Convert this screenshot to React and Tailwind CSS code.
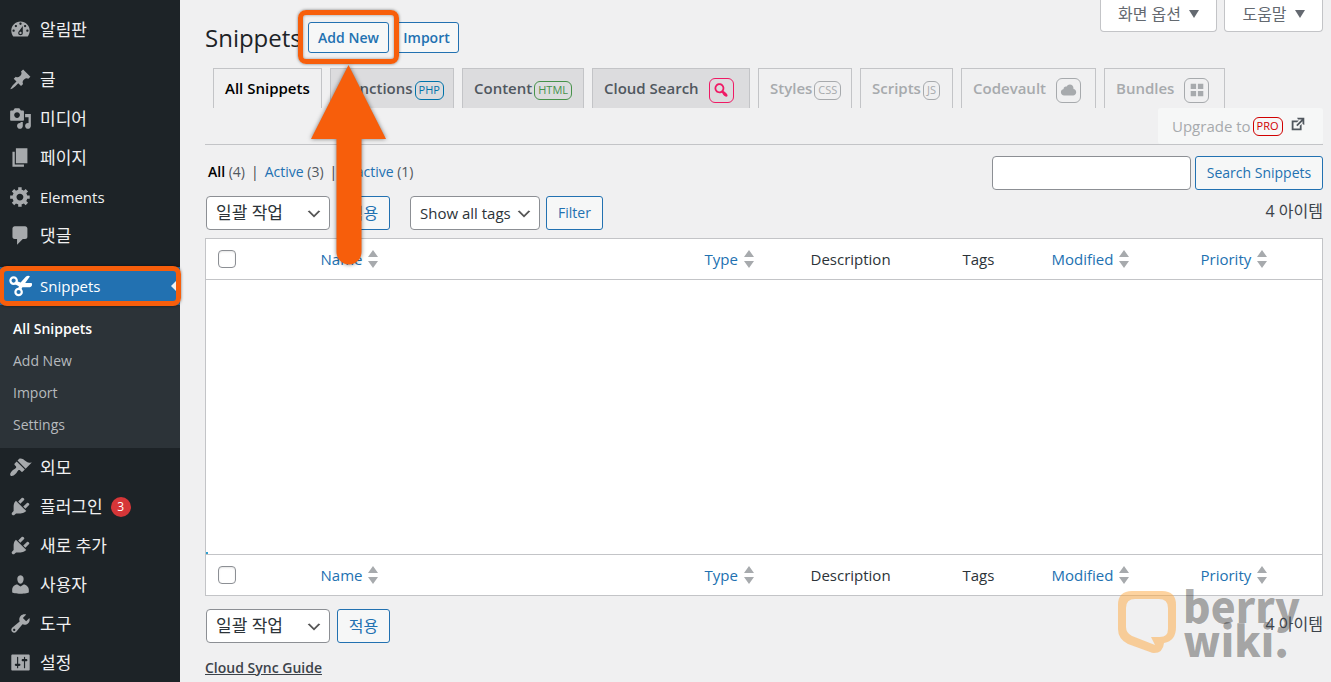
import React from "react";

const ICONS = {
  dashboard:
    "M3.76 16h12.48c1.1-1.37 1.76-3.11 1.76-5 0-4.42-3.58-8-8-8s-8 3.58-8 8c0 1.89.66 3.63 1.76 5zM10 4c.55 0 1 .45 1 1s-.45 1-1 1-1-.45-1-1 .45-1 1-1zM6 6c.55 0 1 .45 1 1s-.45 1-1 1-1-.45-1-1 .45-1 1-1zm8 0c.55 0 1 .45 1 1s-.45 1-1 1-1-.45-1-1 .45-1 1-1zm-5.37 5.55L12 7v6c0 1.1-.9 2-2 2s-2-.9-2-2c0-.57.24-1.08.63-1.45zM4 10c.55 0 1 .45 1 1s-.45 1-1 1-1-.45-1-1 .45-1 1-1zm12 0c.55 0 1 .45 1 1s-.45 1-1 1-1-.45-1-1 .45-1 1-1zm-5 3c0-.55-.45-1-1-1s-1 .45-1 1 .45 1 1 1 1-.45 1-1z",
  post: "M10.44 3.02l1.82-1.82 6.36 6.35-1.83 1.82c-1.05-.68-2.48-.57-3.41.36l-.75.75c-.92.93-1.04 2.35-.35 3.41l-1.83 1.82-2.41-2.41-2.8 2.79c-.42.42-3.38 2.71-3.8 2.29s1.86-3.39 2.28-3.81l2.79-2.79L4.1 9.36l1.83-1.82c1.05.69 2.48.57 3.4-.36l.75-.75c.93-.92 1.05-2.35.36-3.41z",
  media:
    "M13 11V4c0-.55-.45-1-1-1h-1.67L9 1H5L3.67 3H2c-.55 0-1 .45-1 1v7c0 .55.45 1 1 1h10c.55 0 1-.45 1-1zM7 4.5c1.38 0 2.5 1.12 2.5 2.5S8.38 9.5 7 9.5 4.5 8.38 4.5 7 5.62 4.5 7 4.5zM14 6h5v10.5c0 1.38-1.12 2.5-2.5 2.5S14 17.88 14 16.5s1.12-2.5 2.5-2.5c.17 0 .34.02.5.05V9h-3V6zm-4 8.05V13h2v3.5c0 1.38-1.12 2.5-2.5 2.5S7 17.88 7 16.5 8.12 14 9.5 14c.17 0 .34.02.5.05z",
  page: "M6 15V2h10v13H6zm-1 1h8v2H3V5h2v11z",
  generic:
    "M18 12h-2.18c-.17.7-.44 1.35-.81 1.93l1.54 1.54-2.1 2.1-1.54-1.54c-.58.36-1.23.63-1.91.79V19H8v-2.18c-.68-.16-1.33-.43-1.91-.79l-1.54 1.54-2.12-2.12 1.54-1.54c-.36-.58-.63-1.23-.79-1.91H1V9.03h2.17c.16-.7.44-1.35.8-1.94L2.43 5.55l2.1-2.1 1.54 1.54c.58-.37 1.24-.64 1.93-.81V2h3v2.18c.68.16 1.33.43 1.91.79l1.54-1.54 2.12 2.12-1.54 1.54c.36.59.64 1.24.8 1.94H18V12zm-8.5 1.5c1.66 0 3-1.34 3-3s-1.34-3-3-3-3 1.34-3 3 1.34 3 3 3z",
  comments:
    "M5 2h9c1.1 0 2 .9 2 2v7c0 1.1-.9 2-2 2h-2l-5 5v-5H5c-1.1 0-2-.9-2-2V4c0-1.1.9-2 2-2z",
  appearance:
    "M14.48 11.06L7.41 3.99l1.5-1.5c.5-.56 2.3-.47 3.51.32 1.21.8 1.43 1.28 2.91 2.1 1.18.64 2.45 1.26 4.45.85zm-.71.71L6.7 4.7 4.93 6.47c-.39.39-.39 1.02 0 1.41l1.06 1.06c.39.39.39 1.03 0 1.42-.6.6-1.43 1.11-2.21 1.69-.35.26-.7.53-1.01.84C1.43 14.23.4 16.08 1.4 17.07c.99 1 2.84-.03 4.18-1.36.31-.31.58-.66.85-1.02.57-.78 1.08-1.61 1.69-2.21.39-.39 1.02-.39 1.41 0l1.06 1.06c.39.39 1.02.39 1.41 0z",
  plugins:
    "M13.11 4.36L9.87 7.6 8 5.73l3.24-3.24c.35-.34 1.05-.2 1.56.32.52.51.66 1.21.31 1.55zm-8 1.77l.91-1.12 9.01 9.01-1.19.84c-.71.71-2.63 1.16-3.82 1.16H6.14L4.9 17.26c-.59.59-1.54.59-2.12 0-.59-.58-.59-1.53 0-2.12l1.24-1.24v-3.88c0-1.13.4-3.19 1.09-3.89zm7.26 3.97l3.24-3.24c.34-.35 1.04-.21 1.55.31.52.51.66 1.21.31 1.55l-3.24 3.25z",
  users:
    "M10 9.25c-2.27 0-2.73-3.44-2.73-3.44C7 4.02 7.82 2 9.97 2c2.16 0 2.98 2.02 2.71 3.81 0 0-.41 3.44-2.68 3.44zm0 2.57L12.72 10c2.39 0 4.52 2.33 4.52 4.53v2.49s-3.65 1.13-7.24 1.13c-3.65 0-7.24-1.13-7.24-1.13v-2.49c0-2.25 1.94-4.48 4.47-4.48z",
  tools:
    "M16.68 9.77c-1.34 1.34-3.3 1.67-4.95.99l-5.41 6.52c-.99.99-2.59.99-3.58 0s-.99-2.59 0-3.57l6.52-5.42c-.68-1.65-.35-3.61.99-4.95 1.28-1.28 3.12-1.62 4.72-1.06l-2.89 2.89 2.82 2.82 2.86-2.87c.53 1.58.18 3.39-1.08 4.65zM3.81 16.21c.4.39 1.04.39 1.43 0 .4-.4.4-1.04 0-1.43-.39-.4-1.03-.4-1.43 0-.39.39-.39 1.03 0 1.43z",
  settings:
    "M18 16V4c0-.55-.45-1-1-1H3c-.55 0-1 .45-1 1v12c0 .55.45 1 1 1h14c.55 0 1-.45 1-1zM8 11h1c.55 0 1 .45 1 1s-.45 1-1 1H8v1.5c0 .28-.22.5-.5.5s-.5-.22-.5-.5V13H6c-.55 0-1-.45-1-1s.45-1 1-1h1V5.5c0-.28.22-.5.5-.5s.5.22.5.5V11zm5-2h-1c-.55 0-1-.45-1-1s.45-1 1-1h1V5.5c0-.28.22-.5.5-.5s.5.22.5.5V7h1c.55 0 1 .45 1 1s-.45 1-1 1h-1v5.5c0 .28-.22.5-.5.5s-.5-.22-.5-.5V9z",
  cloud:
    "M14.9 9c1.8.2 3.1 1.7 3.1 3.5 0 1.9-1.6 3.5-3.5 3.5h-10C2.6 16 1 14.4 1 12.5 1 10.7 2.3 9.3 4.1 9 4 8.9 4 8.7 4 8.5 4 7.1 5.1 6 6.5 6c.3 0 .7.1.9.2C8.1 4.9 9.4 4 11 4c2.2 0 4 1.8 4 4 0 .4-.1.7-.1 1z",
  search:
    "M12.14 4.18c1.87 1.87 2.11 4.75.72 6.89.12.1.22.21.36.31.2.16.47.36.81.59.34.24.56.39.66.47.42.31.73.57.94.78.32.32.6.65.84 1 .25.35.44.69.59 1.04.14.35.21.68.18 1-.02.32-.14.59-.36.81s-.49.34-.81.36c-.31.02-.65-.04-.99-.19-.35-.14-.7-.34-1.04-.59-.35-.24-.68-.52-1-.84-.21-.21-.47-.52-.77-.93-.1-.13-.25-.35-.47-.66-.22-.32-.4-.57-.56-.78-.16-.2-.29-.35-.44-.5-2.07 1.09-4.69.76-6.44-.98-2.14-2.15-2.14-5.64 0-7.78 2.15-2.15 5.63-2.15 7.78 0zm-1.41 6.36c1.36-1.37 1.36-3.58 0-4.95-1.37-1.37-3.59-1.37-4.95 0-1.37 1.37-1.37 3.58 0 4.95 1.36 1.37 3.58 1.37 4.95 0z",
  external: "M9 3h8v8l-2-1V6.92l-5.6 5.59-1.41-1.41L14.08 5H10zm3 12v-3l2-2v7H3V6h8L9 8H5v7h7z",
  grid: "M9 9V3H3v6h6zm8 0V3h-6v6h6zm-8 8v-6H3v6h6zm8 0v-6h-6v6h6z",
};

function Icon({ name, className }) {
  return (
    <svg viewBox="0 0 20 20" fill="currentColor" aria-hidden="true" className={className}>
      <path d={ICONS[name]} />
    </svg>
  );
}

function ScissorsIcon() {
  return (
    <svg viewBox="0 0 24 22" aria-hidden="true" className="h-[22px] w-6 shrink-0">
      <circle cx="4.6" cy="5.6" r="3.2" fill="none" stroke="#fff" strokeWidth="2.2" />
      <circle cx="9.6" cy="17" r="3.2" fill="none" stroke="#fff" strokeWidth="2.2" />
      <path
        fill="#fff"
        d="M7.4 5.9L11.600 7.500L16.800 1.800C18 .6 20.200.5 20.900 1.500L16.200 8H22.600C23.800 9.600 22.600 12.200 20.800 12.200H13.400L11.800 15.200L9 13.800L9.900 11.200L5.900 9.200Z"
      />
    </svg>
  );
}

function MenuItem({ icon, label, latin, badge }) {
  return (
    <li>
      <a href="#" className="flex h-[39px] items-center gap-2 pl-[9px] text-[#f0f0f1]">
        <Icon name={icon} className="size-[23px] shrink-0 text-[#a7aaad]" />
        <span className={latin ? "text-[15px]" : "text-[17px]"}>{label}</span>
        {badge && (
          <span className="flex size-5 items-center justify-center rounded-full bg-[#d63638] text-xs text-white">
            {badge}
          </span>
        )}
      </a>
    </li>
  );
}

function Sidebar() {
  return (
    <nav aria-label="관리자 메뉴" className="w-[180px] shrink-0 bg-[#1d2327] pt-[10px]">
      <ul>
        <MenuItem icon="dashboard" label="알림판" />
      </ul>
      <ul className="mt-[11px]">
        <MenuItem icon="post" label="글" />
        <MenuItem icon="media" label="미디어" />
        <MenuItem icon="page" label="페이지" />
        <MenuItem icon="generic" label="Elements" latin />
        <MenuItem icon="comments" label="댓글" />
      </ul>
      <div className="relative mt-3">
        <a
          href="#"
          className="flex h-[38px] items-center gap-[7px] bg-[#2271b1] pl-[9px] text-[15px] text-white"
        >
          <ScissorsIcon />
          <span>Snippets</span>
          <svg viewBox="0 0 9 18" aria-hidden="true" className="ml-auto h-[18px] w-[9px]">
            <path d="M9 0v18L0 9z" fill="#f0f0f1" />
          </svg>
        </a>
        <div className="pointer-events-none absolute -inset-x-px -inset-y-px rounded-lg border-5 border-[#f75e0b] shadow-[0_0_3px_rgba(0,0,0,0.5)]" />
      </div>
      <ul className="bg-[#2c3338] pt-2 pb-[7px] text-sm text-[#b6babe]">
        <li>
          <a href="#" className="flex h-8 items-center pl-[13px] font-semibold text-white">
            All Snippets
          </a>
        </li>
        <li>
          <a href="#" className="flex h-8 items-center pl-[13px]">
            Add New
          </a>
        </li>
        <li>
          <a href="#" className="flex h-8 items-center pl-[13px]">
            Import
          </a>
        </li>
        <li>
          <a href="#" className="flex h-8 items-center pl-[13px]">
            Settings
          </a>
        </li>
      </ul>
      <ul>
        <MenuItem icon="appearance" label="외모" />
        <MenuItem icon="plugins" label="플러그인" badge="3" />
        <MenuItem icon="plugins" label="새로 추가" />
        <MenuItem icon="users" label="사용자" />
        <MenuItem icon="tools" label="도구" />
        <MenuItem icon="settings" label="설정" />
      </ul>
    </nav>
  );
}

function PointerArrow() {
  return (
    <svg
      viewBox="0 0 83 208"
      aria-hidden="true"
      className="pointer-events-none absolute top-[41px] left-[-1px] z-10 h-[208px] w-[83px] drop-shadow-[0_0_2px_rgba(0,0,0,0.5)]"
    >
      <path d="M41.500 2L79 76H54.500V189a12.500 12.500 0 0 1-25 0V76H4z" fill="#f75e0b" />
    </svg>
  );
}

function Tab({ label, tone, width, children }) {
  const tones = {
    current: "text-black",
    normal: "bg-[#dcdcde] text-[#50575e]",
    pro: "text-[#a7aaad]",
  };
  return (
    <a
      href="#"
      className={`flex h-10 shrink-0 items-center border border-b-0 border-[#c3c4c7] pb-[2px] pl-[11px] text-[15px] font-semibold whitespace-nowrap ${tones[tone]} ${width}`}
    >
      {label}
      {children && <span className="pt-[5px]">{children}</span>}
    </a>
  );
}

function TypeBadge({ className, children }) {
  return (
    <span
      className={`ml-[2px] flex h-[19px] items-center rounded-md border px-[3px] text-[11px] font-medium ${className}`}
    >
      {children}
    </span>
  );
}

function IconBadge({ icon, className }) {
  return (
    <span className={`ml-[10px] flex size-[25px] items-center justify-center rounded-md border ${className}`}>
      <Icon name={icon} className="size-[18px]" />
    </span>
  );
}

function SelectBox({ label, value, className }) {
  return (
    <div className={`relative ${className}`}>
      <select
        aria-label={label}
        className="block h-[34px] w-full appearance-none rounded-[4px] border border-[#8c8f94] bg-white pr-6 pl-[9px] text-[#2c3338]"
      >
        <option>{value}</option>
      </select>
      <svg
        viewBox="0 0 20 20"
        aria-hidden="true"
        className="pointer-events-none absolute top-[9px] right-[7px] size-[18px]"
      >
        <path d="M5 6l5 5 5-5 2 1-7 7-7-7 2-1z" fill="#555" />
      </svg>
    </div>
  );
}

const BUTTON =
  "flex h-[34px] shrink-0 items-center justify-center rounded-[3px] border border-[#2271b1] bg-[#f6f7f7] text-[#2271b1]";

function Sortable({ children }) {
  return (
    <a href="#" className="flex items-center gap-[6px] text-[#2271b1]">
      {children}
      <svg viewBox="0 0 10 20" aria-hidden="true" className="h-5 w-[10px]">
        <path d="M5 1l5 7H0zM5 19l5-7H0z" fill="#a7aaad" />
      </svg>
    </a>
  );
}

function HeadingRow({ id }) {
  return (
    <tr className="h-[41px] text-[15px] text-[#2c3338]">
      <td className="pl-3">
        <input
          type="checkbox"
          id={id}
          aria-label="모두 선택"
          className="block size-[18px] appearance-none rounded-[4px] border border-[#8c8f94] bg-white shadow-[inset_0_1px_2px_rgba(0,0,0,0.1)]"
        />
      </td>
      <th scope="col" className="text-left font-normal">
        <Sortable>Name</Sortable>
      </th>
      <th scope="col" className="text-left font-normal">
        <Sortable>Type</Sortable>
      </th>
      <th scope="col" className="text-left font-normal">
        Description
      </th>
      <th scope="col" className="text-left font-normal">
        Tags
      </th>
      <th scope="col" className="text-left font-normal">
        <Sortable>Modified</Sortable>
      </th>
      <th scope="col" className="text-left font-normal">
        <Sortable>Priority</Sortable>
      </th>
    </tr>
  );
}

function SnippetsTable() {
  return (
    <table className="w-full table-fixed border-collapse border border-[#c3c4c7] bg-white">
      <colgroup>
        <col className="w-[115px]" />
        <col />
        <col className="w-[106px]" />
        <col className="w-[152px]" />
        <col className="w-[89px]" />
        <col className="w-[149px]" />
        <col className="w-[122px]" />
      </colgroup>
      <thead className="border-b border-[#c3c4c7]">
        <HeadingRow id="select-all-top" />
      </thead>
      <tbody>
        <tr>
          <td colSpan={7} className="h-[275px] align-bottom">
            <div className="size-[2px] bg-[#2e9fd0]" />
          </td>
        </tr>
      </tbody>
      <tfoot className="border-t border-[#c3c4c7]">
        <HeadingRow id="select-all-bottom" />
      </tfoot>
    </table>
  );
}

function Watermark() {
  return (
    <div
      aria-hidden="true"
      className="pointer-events-none absolute right-[28px] bottom-[26px] flex items-center gap-[7px]"
    >
      <svg viewBox="0 0 58 62" className="h-[62px] w-[58px]">
        <path
          fill="#fda73f"
          fillOpacity="0.5"
          fillRule="evenodd"
          d="M14 0H44Q58 0 58 14V36Q58 50 46 52Q45 62 36 62Q34 62 32 61L10 53Q0 48 0 38V14Q0 0 14 0ZM17 8Q8 8 8 17V36Q8 42 14 45L37 54L33 46H42Q50 46 50 38V17Q50 8 41 8Z"
        />
      </svg>
      <div className="w-[120px] font-['Noto_Sans_CJK_KR',sans-serif] text-[42px] leading-[34px] font-black text-black/33">
        <div>berry</div>
        <div>wiki.</div>
      </div>
    </div>
  );
}

export default function App() {
  return (
    <div className="flex min-h-screen overflow-x-hidden bg-[#f0f0f1] font-['Open_Sans','Noto_Sans_CJK_KR',sans-serif] text-[15px] leading-5 text-[#3c434a]">
      <Sidebar />
      <main className="relative min-w-0 flex-1 pr-2 pl-[25px]">
        <header className="flex items-start justify-between">
          <div className="flex items-center pt-[22px]">
            <h1 className="w-[103px] text-2xl leading-[31px] text-[#1d2327]">Snippets</h1>
            <div className="relative">
              <a
                href="#"
                className="flex h-[31px] w-[81px] items-center justify-center rounded-[3px] border border-[#2271b1] bg-[#f6f7f7] text-sm font-semibold whitespace-nowrap text-[#2271b1]"
              >
                Add New
              </a>
              <div className="pointer-events-none absolute -inset-x-[10px] -top-3 -bottom-[11px] z-10 rounded-lg border-5 border-[#f75e0b] shadow-[0_0_3px_rgba(0,0,0,0.5),inset_0_0_3px_rgba(0,0,0,0.4)]" />
              <PointerArrow />
            </div>
            <a
              href="#"
              className="ml-[5px] flex h-[31px] w-[65px] items-center justify-center rounded-[3px] border border-[#2271b1] bg-[#f6f7f7] text-sm font-semibold text-[#2271b1]"
            >
              Import
            </a>
          </div>
          <div className="flex gap-[7px] text-base text-[#646970]">
            <button
              type="button"
              className="flex h-8 w-[117px] items-center justify-center gap-2 rounded-b-[4px] border border-t-0 border-[#c3c4c7] bg-white pb-1"
            >
              화면 옵션
              <svg viewBox="0 0 10 8" aria-hidden="true" className="h-2 w-[10px]">
                <path d="M0 0h10L5 8z" fill="currentColor" />
              </svg>
            </button>
            <button
              type="button"
              className="flex h-8 w-[99px] items-center justify-center gap-2 rounded-b-[4px] border border-t-0 border-[#c3c4c7] bg-white pb-1"
            >
              도움말
              <svg viewBox="0 0 10 8" aria-hidden="true" className="h-2 w-[10px]">
                <path d="M0 0h10L5 8z" fill="currentColor" />
              </svg>
            </button>
          </div>
        </header>

        <nav
          aria-label="Snippet types"
          className="mt-[15px] flex flex-wrap gap-x-2 border-b border-[#c3c4c7] pl-2"
        >
          <Tab label="All Snippets" tone="current" width="w-[109px]" />
          <Tab label="Functions" tone="normal" width="w-[124px]">
            <TypeBadge className="border-[#0073aa] text-[#0073aa]">PHP</TypeBadge>
          </Tab>
          <Tab label="Content" tone="normal" width="w-[122px]">
            <TypeBadge className="border-[#46924a] text-[#46924a]">HTML</TypeBadge>
          </Tab>
          <Tab label="Cloud Search" tone="normal" width="w-[158px]">
            <IconBadge icon="search" className="border-[#ef1a65] text-[#ef1a65]" />
          </Tab>
          <Tab label="Styles" tone="pro" width="w-[94px]">
            <TypeBadge className="border-[#a7aaad]">CSS</TypeBadge>
          </Tab>
          <Tab label="Scripts" tone="pro" width="w-[93px]">
            <TypeBadge className="border-[#a7aaad]">JS</TypeBadge>
          </Tab>
          <Tab label="Codevault" tone="pro" width="w-[135px]">
            <IconBadge icon="cloud" className="border-[#a7aaad]" />
          </Tab>
          <Tab label="Bundles" tone="pro" width="w-[121px]">
            <IconBadge icon="grid" className="border-[#a7aaad]" />
          </Tab>
          <a
            href="#"
            className="ml-auto flex h-9 w-[165px] items-center rounded-[3px] bg-[#f6f7f7] pl-[14px] font-medium whitespace-nowrap text-[#a7aaad]"
          >
            Upgrade to
            <TypeBadge className="border-[#d00000] text-[#d00000]">PRO</TypeBadge>
            <Icon name="external" className="mb-1 ml-[6px] size-[18px] text-[#50575e]" />
          </a>
        </nav>

        <div className="mt-[11px] flex items-center justify-between">
          <ul className="flex gap-[6px] pb-[2px] pl-[3px] text-sm">
            <li>
              <a href="#" className="font-semibold text-black">
                All
              </a>{" "}
              <span className="text-[#50575e]">(4)</span>
            </li>
            <li>|</li>
            <li>
              <a href="#" className="text-[#2271b1]">
                Active
              </a>{" "}
              <span className="text-[#50575e]">(3)</span>
            </li>
            <li>|</li>
            <li>
              <a href="#" className="text-[#2271b1]">
                Inactive
              </a>{" "}
              <span className="text-[#50575e]">(1)</span>
            </li>
          </ul>
          <div className="flex gap-1">
            <input
              type="search"
              aria-label="Search Snippets"
              className="h-[34px] w-[199px] rounded-[4px] border border-[#8c8f94] bg-white px-2"
            />
            <button type="button" className={`${BUTTON} w-[128px] text-sm`}>
              Search Snippets
            </button>
          </div>
        </div>

        <div className="mt-[6px] flex items-center pl-px">
          <SelectBox label="일괄 작업 선택" value="일괄 작업" className="w-[124px] text-[17px]" />
          <button type="button" className={`${BUTTON} ml-[7px] w-[53px] text-base`}>
            적용
          </button>
          <SelectBox label="Tags" value="Show all tags" className="ml-5 w-[130px] text-[15px]" />
          <button type="button" className={`${BUTTON} ml-[6px] w-[57px] text-sm`}>
            Filter
          </button>
          <span className="ml-auto pb-1 text-base leading-5">4 아이템</span>
        </div>

        <div className="mt-2">
          <SnippetsTable />
        </div>

        <Watermark />

        <div className="relative mt-[13px] flex items-center pl-px">
          <SelectBox label="일괄 작업 선택" value="일괄 작업" className="w-[124px] text-[17px]" />
          <button type="button" className={`${BUTTON} ml-[7px] w-[53px] text-base`}>
            적용
          </button>
          <span className="ml-auto pb-1 text-base leading-5">4 아이템</span>
        </div>

        <a href="#" className="mt-[15px] inline-block text-sm font-semibold underline">
          Cloud Sync Guide
        </a>
      </main>
    </div>
  );
}
